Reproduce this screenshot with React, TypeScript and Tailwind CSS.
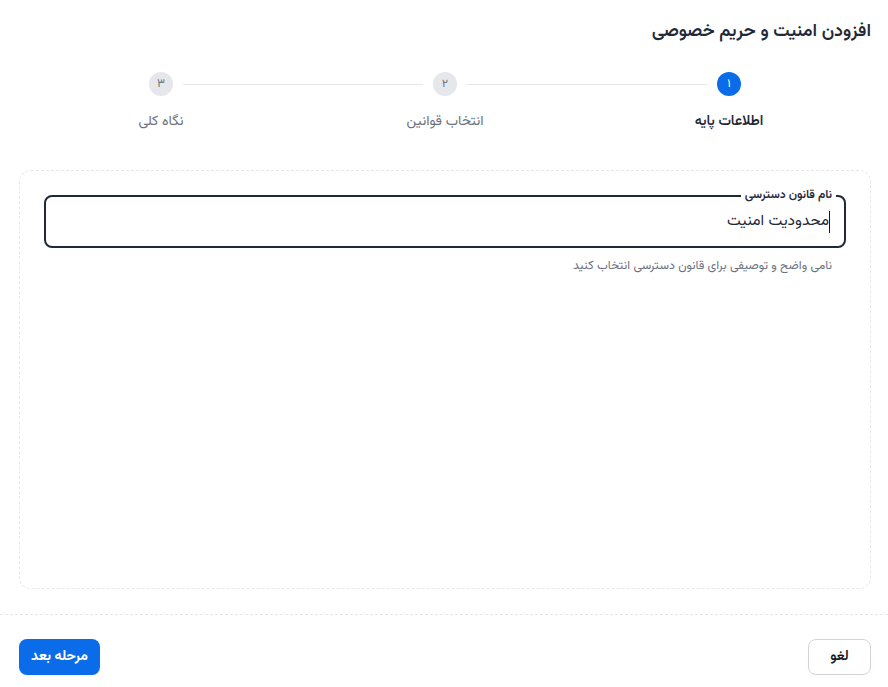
import React from 'react';

const steps = [
  { num: '۱', label: 'اطلاعات پایه' },
  { num: '۲', label: 'انتخاب قوانین' },
  { num: '۳', label: 'نگاه کلی' },
];

function Stepper({ active }: { active: number }) {
  return (
    <div className="grid grid-cols-3 mt-[26px]">
      {steps.map((s, i) => {
        const isActive = i === active;
        return (
          <div key={s.num} className="flex flex-col items-center">
            <div className="flex items-center w-full">
              <div className={i === 0 ? 'flex-1 h-px' : 'flex-1 h-px bg-[#e5e7eb]'} />
              <div
                className={
                  isActive
                    ? 'mx-[10px] w-6 h-6 rounded-full bg-[#0b6ce9] text-white text-[12px] flex items-center justify-center'
                    : 'mx-[10px] w-6 h-6 rounded-full bg-[#e5e7eb] text-[#6b7280] text-[12px] flex items-center justify-center'
                }
              >
                {s.num}
              </div>
              <div className={i === steps.length - 1 ? 'flex-1 h-px' : 'flex-1 h-px bg-[#e5e7eb]'} />
            </div>
            <div
              className={
                isActive
                  ? 'mt-4 text-[14px] leading-5 font-semibold text-[#1f2937]'
                  : 'mt-4 text-[14px] leading-5 text-[#6b7280]'
              }
            >
              {s.label}
            </div>
          </div>
        );
      })}
    </div>
  );
}

export default function App() {
  return (
    <div
      dir="rtl"
      className="w-full h-[687px] bg-white flex flex-col overflow-hidden"
      style={{ fontFamily: 'Vazirmatn, "Noto Sans Arabic", "Noto Sans", "DejaVu Sans", sans-serif' }}
    >
      <div className="pr-[17px] pl-[19px] pt-[18px]">
        <h1 className="text-[18px] leading-7 font-semibold text-[#1f2937]">افزودن امنیت و حریم خصوصی</h1>
        <Stepper active={0} />

        <div className="mt-[38px] h-[419px] rounded-xl border border-dashed border-[#e5e7eb] p-[24px]">
          <div className="relative h-[53px] rounded-lg border-2 border-[#1f2937] flex items-center pr-[14px]">
            <span className="absolute -top-[10px] right-[8px] bg-white px-1 text-[12px] leading-4 font-semibold text-[#1f2937]">
              نام قانون دسترسی
            </span>
            <div className="flex items-center">
              <span className="w-px h-[22px] bg-[#111827]" />
              <span className="text-[15.5px] text-[#1f2937]">محدودیت امنیت</span>
            </div>
          </div>
          <p className="mt-[10px] pr-[14px] text-[12.3px] leading-4 text-[#6b7280]">
            نامی واضح و توصیفی برای قانون دسترسی انتخاب کنید
          </p>
        </div>
      </div>

      <div className="mt-[25px] border-t border-dashed border-[#e5e7eb]" />

      <div className="pr-[17px] pl-[19px] pt-[24px] flex items-center justify-between">
        <button className="h-9 w-[63px] rounded-lg border border-[#d1d5db] bg-white text-[14px] font-semibold text-[#111827]">
          لغو
        </button>
        <button className="h-9 w-[81px] rounded-lg bg-[#0b6ce9] text-[14px] font-bold text-white">
          مرحله بعد
        </button>
      </div>
    </div>
  );
}
